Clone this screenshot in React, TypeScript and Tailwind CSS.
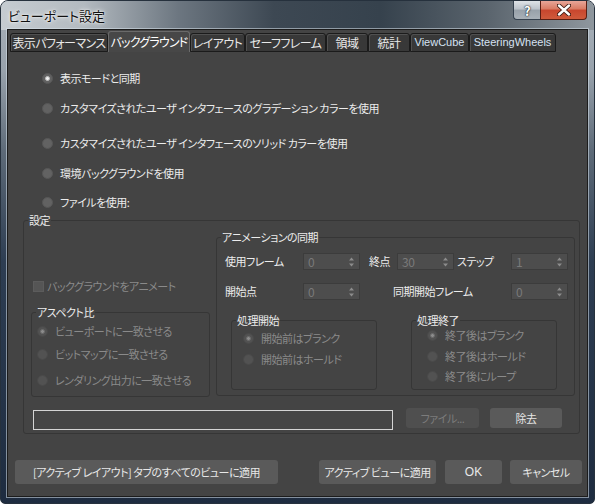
import React from 'react';

const FONT = "font-['Noto_Sans_CJK_JP','Noto_Sans',sans-serif] [font-feature-settings:'palt']";

function Radio({ checked, disabled }: { checked?: boolean; disabled?: boolean }) {
  if (disabled) {
    return (
      <span className="relative shrink-0 w-[11px] h-[11px] rounded-full bg-[#525252] border border-[#4a4a4a]">
        {checked && <span className="absolute inset-[2px] rounded-full bg-[#8c8c8c] border border-[#6a6a6a]" />}
      </span>
    );
  }
  return (
    <span className="relative shrink-0 w-[11px] h-[11px] rounded-full bg-[#626262] border border-[#575757]">
      {checked && <span className="absolute inset-[2px] rounded-full bg-[#f0f0f0] border border-[#bdbdbd]" />}
    </span>
  );
}

function RadioRow({
  label,
  checked,
  disabled,
  className = '',
}: {
  label: string;
  checked?: boolean;
  disabled?: boolean;
  className?: string;
}) {
  return (
    <div className={`flex items-center h-[14px] whitespace-nowrap ${className}`}>
      <Radio checked={checked} disabled={disabled} />
      <span className={disabled ? 'ml-[7px] text-[#8a8a8a]' : 'ml-[7px] text-[#ececec]'}>{label}</span>
    </div>
  );
}

function Group({ label, className = '', children }: { label: string; className?: string; children?: React.ReactNode }) {
  return (
    <div className={`relative shrink-0 border border-[#363636] rounded-[3px] ${className}`}>
      <span className="absolute -top-[8px] left-[4px] px-[1px] bg-[#444444] leading-[14px] text-[#ececec] whitespace-nowrap">
        {label}
      </span>
      {children}
    </div>
  );
}

function Spinner({ value, className = '' }: { value: string; className?: string }) {
  return (
    <div className={`shrink-0 flex items-center h-[17px] bg-[#4d4d4d] border border-[#3c3c3c] pl-[4px] pr-[5px] ${className}`}>
      <span className="flex-1 text-[#7a7a7a] text-[12px]">{value}</span>
      <svg width="5" height="10" viewBox="0 0 5 10">
        <path d="M2.5 0.5 L5 3.5 H0 Z M0 6.5 H5 L2.5 9.5 Z" fill="#8c8c8c" />
      </svg>
    </div>
  );
}

const tabs = [
  { label: '表示パフォーマンス', w: 'w-[98px]' },
  { label: 'バックグラウンド', w: 'w-[82px]', active: true },
  { label: 'レイアウト', w: 'w-[55px]' },
  { label: 'セーフフレーム', w: 'w-[81px]' },
  { label: '領域', w: 'w-[42px]' },
  { label: '統計', w: 'w-[42px]' },
  { label: 'ViewCube', w: 'w-[59px]', latin: true },
  { label: 'SteeringWheels', w: 'w-[87px]', latin: true },
];

export default function App() {
  return (
    <div className={`w-[595px] h-[504px] ${FONT} text-[11px] tracking-[-0.5px] leading-none select-none`}>
      <div className="w-full h-full flex flex-col overflow-hidden rounded-t-[8px] rounded-b-[5px] border border-[#26313d] bg-[linear-gradient(180deg,#aab2ba_0%,#98a2ac_14%,#5d6a78_30%,#2d3d52_52%,#1e2c40_100%)]">
        {/* title bar */}
        <div className="h-[29px] shrink-0 flex bg-[linear-gradient(90deg,#c6ccd1_0%,#b3bac0_14%,#6c7680_30%,#3d4853_46%,#36424d_64%,#5a646d_82%,#8f979e_100%)]">
          <div className="pl-[7px] flex items-center text-[13px] tracking-normal text-[#101010] [text-shadow:0_0_5px_#ffffff,0_0_2px_#ffffff]">
            ビューポート設定
          </div>
          <div className="ml-auto mr-[7px] flex items-start">
            <div className="w-[27px] h-[19px] flex items-center justify-center rounded-bl-[4px] border border-[#36424f] border-t-0 border-r-0 bg-[linear-gradient(180deg,#dfe3e7_0%,#bcc3ca_45%,#98a1aa_50%,#a9b1b8_100%)] text-[13px] font-bold text-white [text-shadow:0_0_1px_#000,0_0_2px_#1a2430]">
              ?
            </div>
            <div className="w-[47px] h-[19px] flex items-center justify-center rounded-br-[4px] border border-[#5a1f14] border-t-0 bg-[linear-gradient(180deg,#e8a698_0%,#d97a63_45%,#c8462e_50%,#cf5a3b_100%)]">
              <svg width="14" height="12" viewBox="0 0 14 12">
                <path d="M2 1.5 L12 10.5 M12 1.5 L2 10.5" stroke="#3a1810" strokeWidth="4.2" strokeLinecap="round" />
                <path d="M2 1.5 L12 10.5 M12 1.5 L2 10.5" stroke="#ffffff" strokeWidth="2.4" strokeLinecap="round" />
              </svg>
            </div>
          </div>
        </div>

        {/* client area */}
        <div className="mx-[7px] h-[466px] shrink-0 flex flex-col bg-[#444444] text-[#ececec] shadow-[0_0_0_1px_#1c1c1c,0_0_0_2px_rgba(215,225,235,0.55)]">
          {/* tabs */}
          <div className="h-[22px] shrink-0 flex items-end pl-[2px] whitespace-nowrap">
            {tabs.map((t) =>
              t.active ? (
                <div
                  key={t.label}
                  className={`${t.w} h-[21px] flex items-center justify-center rounded-t-[3px] border border-b-0 border-[#6a6a6a] bg-[#474747] text-[#ffffff] text-[12px] tracking-[-0.8px]`}
                >
                  {t.label}
                </div>
              ) : (
                <div
                  key={t.label}
                  className={`${t.w} h-[19px] flex items-center justify-center rounded-t-[3px] border border-[#1b1b1b] bg-[#383838] shadow-[inset_1px_1px_0_#505050] ${
                    t.latin
                      ? "text-[#d6e2f2] text-[11px] tracking-normal font-['Liberation_Sans',sans-serif]"
                      : 'text-[#e8e8e8] text-[12px] tracking-[-0.6px]'
                  }`}
                >
                  {t.label}
                </div>
              )
            )}
          </div>

          {/* panel */}
          <div className="flex flex-col">
            <div className="pl-[34px] flex flex-col">
              <RadioRow className="mt-[19px]" label="表示モードと同期" checked />
              <RadioRow className="mt-[16px]" label="カスタマイズされたユーザ インタフェースのグラデーション カラーを使用" />
              <RadioRow className="mt-[21px]" label="カスタマイズされたユーザ インタフェースのソリッド カラーを使用" />
              <RadioRow className="mt-[16px]" label="環境バックグラウンドを使用" />
              <RadioRow className="mt-[15px]" label="ファイルを使用:" />
            </div>

            {/* 設定 */}
            <Group label="設定" className="ml-[15px] mt-[11px] w-[557px] h-[214px] flex flex-col">
              <div className="flex">
                {/* left column */}
                <div className="w-[186px] shrink-0 flex flex-col">
                  <div className="mt-[59px] ml-[9px] h-[12px] flex items-center whitespace-nowrap">
                    <span className="w-[11px] h-[11px] bg-[#555555] border border-[#5c5c5c]" />
                    <span className="ml-[3px] text-[#8a8a8a]">バックグラウンドをアニメート</span>
                  </div>
                  <Group label="アスペクト比" className="ml-[7px] mt-[20px] w-[179px] h-[85px] flex flex-col pl-[5px]">
                    <RadioRow className="mt-[11px]" label="ビューポートに一致させる" checked disabled />
                    <RadioRow className="mt-[9px]" label="ビットマップに一致させる" disabled />
                    <RadioRow className="mt-[12px]" label="レンダリング出力に一致させる" disabled />
                  </Group>
                </div>

                {/* animation sync */}
                <Group label="アニメーションの同期" className="ml-[6px] mt-[16px] w-[359px] h-[159px] flex flex-col">
                  <div className="mt-[15px] pl-[8px] flex items-center whitespace-nowrap">
                    <span className="w-[78px] shrink-0">使用フレーム</span>
                    <Spinner value="0" className="w-[57px]" />
                    <span className="ml-[9px] w-[28px] shrink-0">終点</span>
                    <Spinner value="30" className="w-[57px]" />
                    <span className="ml-[3px] w-[54px] shrink-0">ステップ</span>
                    <Spinner value="1" className="w-[57px]" />
                  </div>
                  <div className="mt-[13px] pl-[8px] flex items-center whitespace-nowrap">
                    <span className="w-[78px] shrink-0">開始点</span>
                    <Spinner value="0" className="w-[57px]" />
                    <span className="ml-[33px] w-[118px] shrink-0">同期開始フレーム</span>
                    <Spinner value="0" className="w-[57px]" />
                  </div>
                  <div className="mt-[20px] flex items-start">
                    <Group label="処理開始" className="ml-[14px] w-[146px] h-[70px] flex flex-col pl-[11px]">
                      <RadioRow className="mt-[10px]" label="開始前はブランク" checked disabled />
                      <RadioRow className="mt-[7px]" label="開始前はホールド" disabled />
                    </Group>
                    <Group label="処理終了" className="ml-[34px] w-[146px] h-[70px] flex flex-col pl-[15px]">
                      <RadioRow className="mt-[7px]" label="終了後はブランク" checked disabled />
                      <RadioRow className="mt-[7px]" label="終了後はホールド" disabled />
                      <RadioRow className="mt-[6px]" label="終了後にループ" disabled />
                    </Group>
                  </div>
                </Group>
              </div>

              {/* file row */}
              <div className="mt-[11px] pl-[9px] flex items-start whitespace-nowrap">
                <div className="mt-[2px] w-[360px] h-[20px] border border-[#d4d4d4] bg-[#454545]" />
                <button className="ml-[13px] w-[73px] h-[20px] rounded-[3px] bg-[#4f4f4f] text-[#7c7c7c]">ファイル...</button>
                <button className="ml-[11px] w-[72px] h-[20px] rounded-[3px] bg-[#5a5a5a] text-[#e6e6e6]">除去</button>
              </div>
            </Group>

            {/* bottom buttons */}
            <div className="mt-[26px] pl-[7px] flex whitespace-nowrap">
              <button className="w-[263px] h-[24px] rounded-[3px] bg-[#5a5a5a] text-[#e8e8e8]">
                [アクティブ レイアウト] タブのすべてのビューに適用
              </button>
              <button className="ml-[41px] w-[117px] h-[24px] rounded-[3px] bg-[#5a5a5a] text-[#e8e8e8]">
                アクティブ ビューに適用
              </button>
              <button className="ml-[9px] w-[57px] h-[24px] rounded-[3px] bg-[#5a5a5a] text-[#e8e8e8] tracking-normal font-['Liberation_Sans',sans-serif] text-[12px]">
                OK
              </button>
              <button className="ml-[8px] w-[72px] h-[24px] rounded-[3px] bg-[#5a5a5a] text-[#e8e8e8]">キャンセル</button>
            </div>
          </div>
        </div>
      </div>
    </div>
  );
}
